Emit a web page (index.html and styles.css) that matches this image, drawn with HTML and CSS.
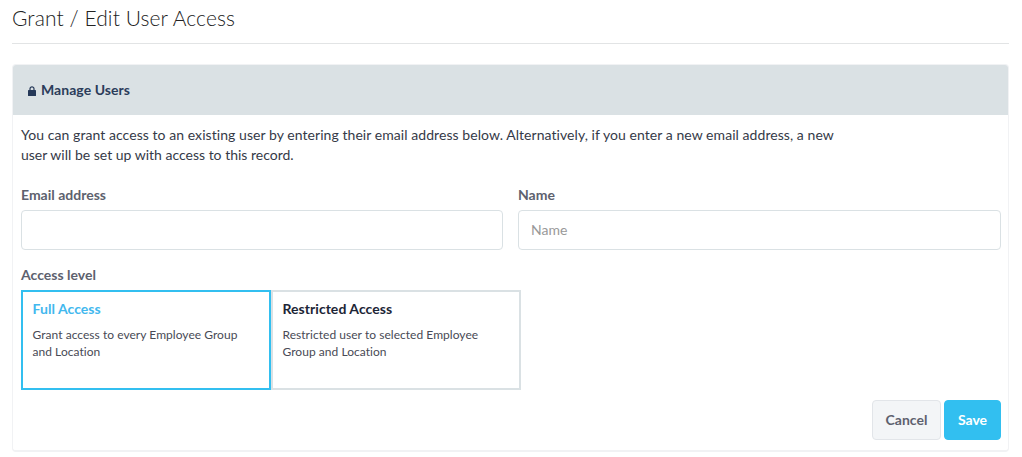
FILE: index.html
```html
<!DOCTYPE html>
<html lang="en">
<head>
  <meta charset="UTF-8">
  <meta name="viewport" content="width=device-width, initial-scale=1.0">
  <title>Grant / Edit User Access</title>
  <link rel="stylesheet" href="styles.css">
</head>
<body>
  <h1>Grant / Edit User Access</h1>

  <form class="panel">
    <div class="panel-heading">
      <svg class="lock" width="8" height="10" viewBox="0 0 8 10">
        <path d="M2 4.5V2.8a2 2 0 0 1 4 0v1.7" fill="none" stroke="#253858" stroke-width="1.2"/>
        <rect x="0" y="4" width="8" height="6" rx="0.6" fill="#253858"/>
      </svg>
      <span class="heading-text">Manage Users</span>
    </div>

    <div class="panel-body">
      <p class="intro"><span class="intro-lead">You can grant access to an existing user by entering their email address below. Alternatively, if you enter a new email address, a new</span><br>user will be set up with access to this record.</p>

      <div class="fields">
        <div class="field">
          <label for="email">Email address</label>
          <input type="email" id="email" name="email">
        </div>
        <div class="field">
          <label for="name">Name</label>
          <input type="text" id="name" name="name" placeholder="Name">
        </div>
      </div>

      <label>Access level</label>
      <div class="levels">
        <div class="level selected">
          <h2>Full Access</h2>
          <p>Grant access to every Employee Group<br>and Location</p>
        </div>
        <div class="level">
          <h2>Restricted Access</h2>
          <p>Restricted user to selected Employee<br>Group and Location</p>
        </div>
      </div>

      <div class="actions">
        <button type="button" class="cancel">Cancel</button>
        <button type="submit" class="save">Save</button>
      </div>
    </div>
  </form>
</body>
</html>
```
FILE: styles.css
```css
* {
  box-sizing: border-box;
}
body {
  margin: 0;
  padding: 0 13px 0 12px;
  background-color: #fff;
  color: #353a48;
  font-family: Lato, "Liberation Sans", sans-serif;
  font-size: 14px;
}
h1 {
  height: 44px;
  margin: 0 0 20px;
  padding-top: 4px;
  border-bottom: 1px solid #e2e4e5;
  color: #222;
  font-size: 21px;
  font-weight: 300;
  letter-spacing: 0.09px;
  line-height: 28px;
}
.panel {
  height: 388px;
  border: 1px solid #f1f2f4;
  border-bottom-width: 2px;
  border-radius: 4px;
}
.panel-heading {
  display: flex;
  align-items: center;
  gap: 5px;
  height: 50px;
  padding-left: 15px;
  border-radius: 3px 3px 0 0;
  background-color: #dae1e4;
  color: #2b3c5a;
  font-weight: 700;
}
.heading-text {
  margin-bottom: 1px;
  letter-spacing: 0.05px;
}
.lock {
  margin-top: 2px;
}
.panel-body {
  padding: 10px 7px 0 8px;
}
.intro {
  margin: 0 0 20px;
  line-height: 20px;
  white-space: nowrap;
}
.intro-lead {
  letter-spacing: 0.06px;
}
.fields {
  display: grid;
  grid-template-columns: 482px 483px;
  gap: 15px;
  margin-bottom: 15px;
}
label {
  display: block;
  height: 25px;
  color: #5d616e;
  font-weight: 700;
  line-height: 20px;
}
input {
  display: block;
  width: 100%;
  height: 40px;
  padding: 0 12px 1px;
  border: 1px solid #dae1e4;
  border-radius: 4px;
  background-color: #fff;
  font-family: inherit;
  font-size: 14px;
}
input::placeholder {
  color: #999;
}
.levels {
  display: flex;
}
.level {
  width: 250px;
  height: 100px;
  padding: 8px 9.5px;
  border: 2px solid #dae1e4;
  white-space: nowrap;
}
.level h2 {
  margin: 0 0 8px;
  color: #1c2536;
  font-size: 14px;
  font-weight: 700;
  letter-spacing: 0.04px;
  line-height: 18px;
}
.level p {
  margin: 0;
  color: #484a55;
  font-size: 12px;
  letter-spacing: 0.04px;
  line-height: 17px;
}
.level.selected {
  border-color: #32bff0;
}
.level.selected h2 {
  color: #42b8ee;
}
.actions {
  display: flex;
  justify-content: flex-end;
  gap: 3px;
  margin-top: 10px;
}
button {
  height: 40px;
  padding: 0 0 2px;
  border: 1px solid #e2e5e9;
  border-radius: 4px;
  font-family: inherit;
  font-size: 14px;
  font-weight: 700;
}
.cancel {
  width: 69px;
  background-color: #f3f5f7;
  color: #5d616e;
}
.save {
  width: 57px;
  border-color: #32bff0;
  background-color: #32bff0;
  color: #fff;
}
```
